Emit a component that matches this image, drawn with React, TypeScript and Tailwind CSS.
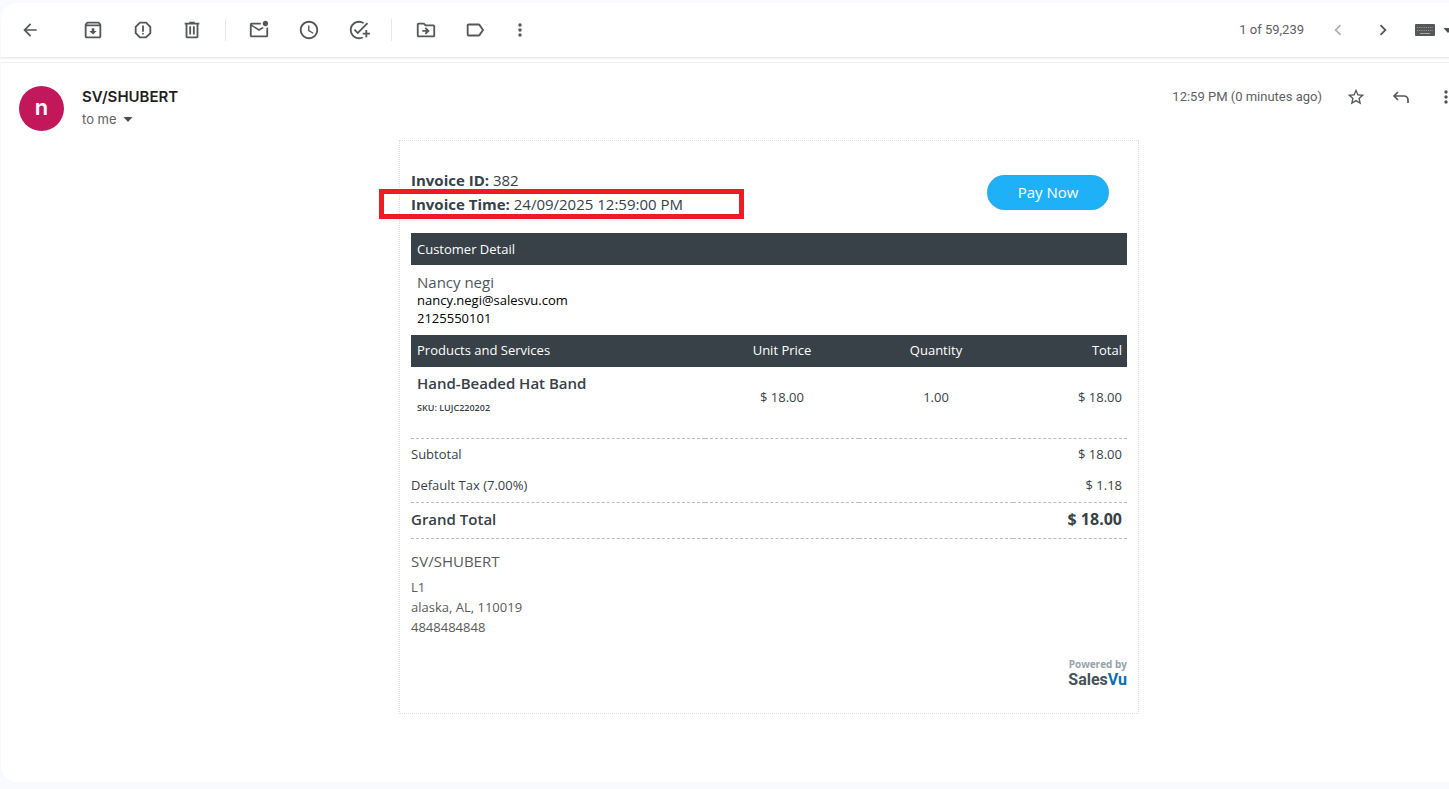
import type { ReactNode } from "react";
import {
  MdAccessTime,
  MdArrowBack,
  MdChevronLeft,
  MdChevronRight,
  MdLabelOutline,
  MdMoreVert,
  MdOutlineAddTask,
  MdOutlineArchive,
  MdOutlineDriveFileMove,
  MdOutlineMarkEmailUnread,
  MdOutlineReport,
  MdStarOutline,
} from "react-icons/md";

interface LineItem {
  name: string;
  sku: string;
  unitPrice: string;
  quantity: string;
  total: string;
}

const ITEMS: LineItem[] = [
  {
    name: "Hand-Beaded Hat Band",
    sku: "LUJC220202",
    unitPrice: "$ 18.00",
    quantity: "1.00",
    total: "$ 18.00",
  },
];

function IconButton({ label, className = "", children }: { label: string; className?: string; children: ReactNode }) {
  return (
    <button
      type="button"
      aria-label={label}
      className={`flex size-8 shrink-0 items-center justify-center rounded-full text-[#55575a] ${className}`}
    >
      {children}
    </button>
  );
}

function Divider({ className }: { className: string }) {
  return <span className={`h-[22px] w-px shrink-0 bg-[#e6e7e9] ${className}`} />;
}

function TrashIcon() {
  return (
    <svg viewBox="0 0 24 24" className="size-[22px]" fill="currentColor" aria-hidden="true">
      <path d="M15 4V3H9v1H4v2h1v13c0 1.100.9 2 2 2h10c1.100 0 2-.9 2-2V6h1V4h-5zm2 15H7V6h10v13zM9 8h2v9H9zm4 0h2v9h-2z" />
    </svg>
  );
}

function KeyboardIcon() {
  return (
    <svg viewBox="0 0 20 12" className="h-3 w-5" aria-hidden="true">
      <rect width="20" height="12" rx="1" fill="#555759" />
      <path d="M2 3.500h16M2 6.500h16" stroke="#98999b" strokeWidth="1" strokeDasharray="1.200 1" />
      <path d="M5 9.500h10" stroke="#a5a6a7" strokeWidth="1" />
    </svg>
  );
}

function ReplyIcon() {
  return (
    <svg viewBox="0 0 20 20" className="size-5" fill="none" stroke="currentColor" strokeWidth="1.700" aria-hidden="true">
      <path d="M7 5 3 9l4 4M3 9h10a4 4 0 0 1 4 4v3" />
    </svg>
  );
}

function Caret() {
  return (
    <svg viewBox="0 0 10 5" className="h-[5px] w-2.5 shrink-0" fill="#4d4f52" aria-hidden="true">
      <path d="M0.500 0h9L5 5z" />
    </svg>
  );
}

function Toolbar() {
  return (
    <header className="flex h-[55px] items-center overflow-hidden border-b border-[#ebebeb] pl-[13px] shadow-[0_1px_1px_#f3f3f3]">
      <IconButton label="Back"><MdArrowBack size={20} /></IconButton>
      <IconButton label="Archive" className="ml-[31px]"><MdOutlineArchive size={22} /></IconButton>
      <IconButton label="Report spam" className="ml-[18px]"><MdOutlineReport size={22} /></IconButton>
      <IconButton label="Delete" className="ml-[17px]"><TrashIcon /></IconButton>
      <Divider className="ml-[17px]" />
      <IconButton label="Mark as unread" className="ml-[17px]"><MdOutlineMarkEmailUnread size={22} /></IconButton>
      <IconButton label="Snooze" className="ml-[18px]"><MdAccessTime size={22} /></IconButton>
      <IconButton label="Add to tasks" className="ml-[18px]"><MdOutlineAddTask size={22} /></IconButton>
      <Divider className="ml-[16px]" />
      <IconButton label="Move to" className="ml-[18px]"><MdOutlineDriveFileMove size={22} /></IconButton>
      <IconButton label="Labels" className="ml-[17px]"><MdLabelOutline size={22} /></IconButton>
      <IconButton label="More" className="ml-[13px]"><MdMoreVert size={20} /></IconButton>

      <span className="ml-auto font-[Roboto,sans-serif] text-[13px] whitespace-nowrap text-[#5e6063]">1 of 59,239</span>
      <IconButton label="Newer" className="ml-[18px] opacity-45"><MdChevronLeft size={22} /></IconButton>
      <IconButton label="Older" className="ml-[13px]"><MdChevronRight size={22} /></IconButton>
      <button type="button" aria-label="Input tools" className="-mr-1 ml-[16px] flex shrink-0 items-center gap-2">
        <KeyboardIcon />
        <Caret />
      </button>
    </header>
  );
}

function MessageHeader() {
  return (
    <div className="flex items-start overflow-hidden pl-[18px]">
      <div className="flex size-[45px] shrink-0 items-center justify-center rounded-full bg-[#c2185b] pb-0.5 text-[22px] font-semibold text-white">
        n
      </div>
      <div className="ml-[18px]">
        <h1 className="text-[15px] leading-[22px] font-semibold text-[#1f1f1f]">SV/SHUBERT</h1>
        <button type="button" className="flex items-center gap-1.5 text-[13px] leading-[22px] text-[#5e6063]">
          to me <Caret />
        </button>
      </div>
      <time className="ml-auto font-[Roboto,sans-serif] text-[13px] leading-[22px] whitespace-nowrap text-[#5e6063]">
        12:59 PM (0 minutes ago)
      </time>
      <IconButton label="Star" className="-mt-[5px] ml-[18px]"><MdStarOutline size={20} /></IconButton>
      <IconButton label="Reply" className="-mt-[5px] ml-[13px]"><ReplyIcon /></IconButton>
      <IconButton label="More" className="-mt-[5px] -mr-[13px] ml-[13px]"><MdMoreVert size={20} /></IconButton>
    </div>
  );
}

function SummaryRow({ label, value }: { label: string; value: string }) {
  return (
    <tr className="h-8">
      <th scope="row" colSpan={3} className="text-left font-normal">{label}</th>
      <td className="pr-[5px] text-right">{value}</td>
    </tr>
  );
}

function ItemsTable() {
  return (
    <table className="mt-2 w-full table-fixed border-collapse text-[13px] text-[#374148]">
      <colgroup>
        <col />
        <col className="w-[154px]" />
        <col className="w-[154px]" />
        <col className="w-[114px]" />
      </colgroup>
      <thead>
        <tr className="h-8 bg-[#374147] text-white">
          <th scope="col" className="pl-1.5 text-left font-medium">Products and Services</th>
          <th scope="col" className="font-medium">Unit Price</th>
          <th scope="col" className="font-medium">Quantity</th>
          <th scope="col" className="pr-[5px] text-right font-medium">Total</th>
        </tr>
      </thead>
      <tbody>
        {ITEMS.map((item) => (
          <tr key={item.sku} className="h-[71px] border-b border-dashed border-[#b9bcbe]">
            <td className="pl-1.5 align-top">
              <p className="mt-[5px] text-[15px] leading-[22px] font-semibold">{item.name}</p>
              <p className="mt-2 text-[9px] leading-3 font-semibold">SKU: {item.sku}</p>
            </td>
            <td className="pb-2.5 text-center">{item.unitPrice}</td>
            <td className="pb-2.5 text-center">{item.quantity}</td>
            <td className="pr-[5px] pb-2.5 text-right">{item.total}</td>
          </tr>
        ))}
      </tbody>
      <tfoot>
        <SummaryRow label="Subtotal" value="$ 18.00" />
        <SummaryRow label="Default Tax (7.00%)" value="$ 1.18" />
        <tr className="h-9 border-y border-dashed border-[#b9bcbe] font-bold">
          <th scope="row" colSpan={3} className="pb-0.5 text-left text-[15px] font-semibold">Grand Total</th>
          <td className="pr-[5px] pb-0.5 text-right text-base">$ 18.00</td>
        </tr>
      </tfoot>
    </table>
  );
}

function Invoice() {
  return (
    <article className="mx-auto w-full max-w-[740px] border border-dotted border-[#dcdcdc] px-[11px] pt-[27px] pb-6 font-['Open_Sans','Noto_Sans',sans-serif] text-[#374148]">
      <div className="flex items-start justify-between">
        <div className="text-[15px] leading-6">
          <p><strong>Invoice ID:</strong> 382</p>
          <p className="relative">
            <strong>Invoice Time:</strong> 24/09/2025 12:59:00 PM
            {/* highlight frame around the invoice time */}
            <span className="absolute -top-[3px] -left-8 h-[30px] w-[365px] border-5 border-[#ed1c24]" />
          </p>
        </div>
        <button
          type="button"
          className="mt-[7px] mr-[18px] h-[35px] w-[122px] rounded-full border border-dotted border-[#4e9fc8] bg-[#1fb1f7] text-[15px] font-medium text-white"
        >
          Pay Now
        </button>
      </div>

      <h2 className="mt-[17px] bg-[#374147] pl-1.5 text-[13px] leading-8 font-medium text-white">Customer Detail</h2>
      <div className="pt-2 pl-1.5 text-[13px] leading-[18px] font-medium text-black">
        <p className="text-[15px] font-normal text-[#4d565c]">Nancy negi</p>
        <p>nancy.negi@salesvu.com</p>
        <p>2125550101</p>
      </div>

      <ItemsTable />

      <address className="mt-2.5 text-[13px] leading-5 text-[#5a5a5a] not-italic">
        <p className="mb-1 text-[15px] leading-6">SV/SHUBERT</p>
        <p>L1</p>
        <p>alaska, AL, 110019</p>
        <p>4848484848</p>
      </address>

      <div className="mt-5 text-right font-bold">
        <p className="text-[10px] leading-[14px] text-[#98a3aa]">Powered by</p>
        <p className="font-[Roboto,sans-serif] text-base leading-[18px] text-[#45525a]">
          Sales<span className="text-[#0b6fad]">Vu</span>
        </p>
      </div>
    </article>
  );
}

export default function App() {
  return (
    <div className="min-h-screen overflow-hidden bg-[#f8fafd] pt-[3px] pb-[7px] pl-px font-[Inter,Roboto,sans-serif]">
      <main className="overflow-hidden rounded-l-2xl bg-white pb-[68px]">
        <Toolbar />
        <div className="mt-1 border-t border-[#eceff1] pt-[23px]">
          <MessageHeader />
          <div className="mt-[9px] pl-[88px]">
            <Invoice />
          </div>
        </div>
      </main>
    </div>
  );
}
